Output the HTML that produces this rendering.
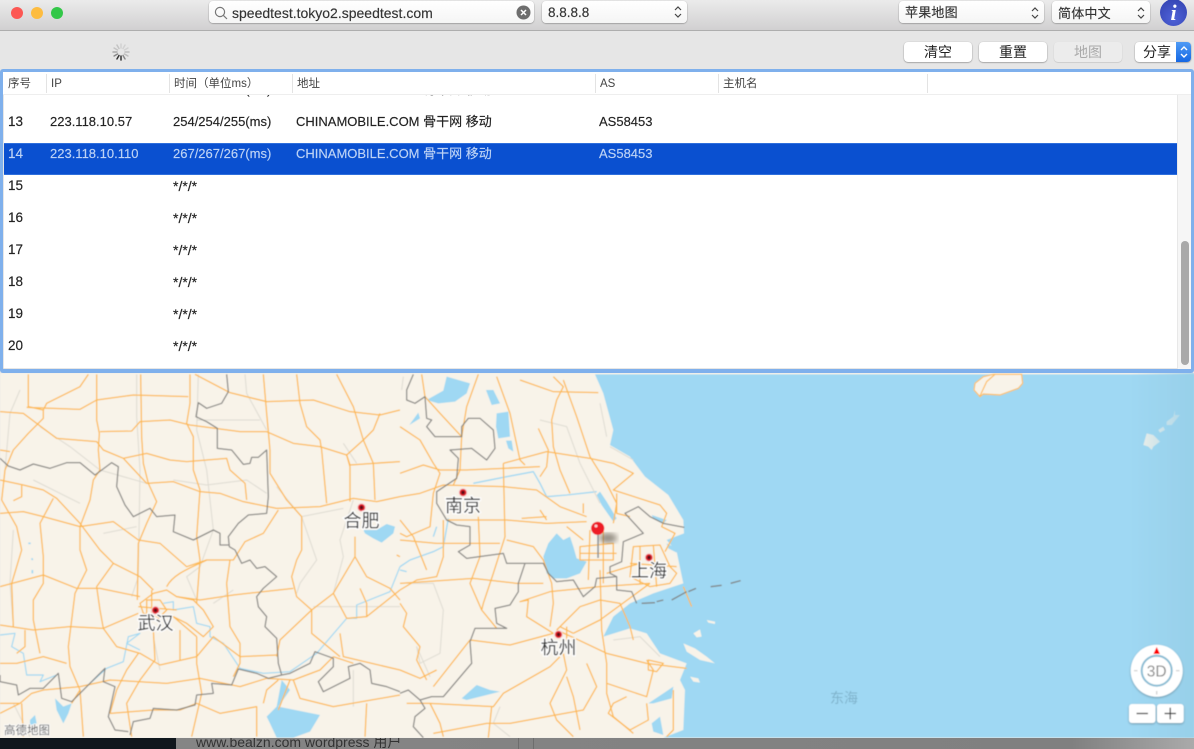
<!DOCTYPE html>
<html><head><meta charset="utf-8"><style>
*{box-sizing:border-box}
html,body{margin:0;padding:0;width:1194px;height:749px;overflow:hidden;background:#e6e6e6;font-family:"Liberation Sans","Noto Sans CJK SC",sans-serif}
.a{position:absolute}
.box{position:absolute;background:linear-gradient(#fff,#f5f5f5);border-radius:4px;box-shadow:0 .5px 1.5px rgba(0,0,0,.4);color:#333;font-size:13px}
.btn{position:absolute;top:42px;height:20px;width:68px;background:#fff;border-radius:4px;box-shadow:0 .5px 1.5px rgba(0,0,0,.45);text-align:center;font-size:14px;line-height:20px;color:#222;filter:blur(.25px)}
.t{position:absolute;font-size:13px;line-height:16px;color:#222;white-space:nowrap;filter:blur(.3px);-webkit-text-stroke:.15px currentColor}
.s{color:#bdd3f5}
.h{position:absolute;top:77px;font-size:11.5px;line-height:14px;color:#444;white-space:nowrap;filter:blur(.3px)}
.sep{position:absolute;top:74px;height:19px;width:1px;background:#e3e3e3}
.ud{position:absolute;width:10px;height:16px}
.city{font-size:18px;fill:#2b2b2b;stroke:#fff;stroke-width:2.5px;paint-order:stroke;text-anchor:middle;font-family:"Liberation Sans","Noto Sans CJK SC",sans-serif}
</style></head><body>
<div class="a" style="left:0;top:0;width:1194px;height:31px;background:linear-gradient(#ebebeb,#d1d0d1);border-bottom:1px solid #aeaeae"></div>
<div class="a" style="left:11px;top:6.5px;width:12px;height:12px;border-radius:50%;background:#fc5753"></div>
<div class="a" style="left:31px;top:6.5px;width:12px;height:12px;border-radius:50%;background:#fdbc40"></div>
<div class="a" style="left:51px;top:6.5px;width:12px;height:12px;border-radius:50%;background:#33c748"></div>

<div class="box" style="left:209px;top:1px;width:325px;height:22px"></div>
<svg class="a" style="left:213px;top:5px" width="16" height="16" viewBox="0 0 16 16" fill="none" stroke="#777" stroke-width="1.2"><circle cx="7" cy="7" r="4.6"/><path d="M10.4 10.4L14 14"/></svg>
<div class="t" style="left:232px;top:5px;font-size:14px;color:#333">speedtest.tokyo2.speedtest.com</div>
<svg class="a" style="left:516px;top:5px" width="15" height="15" viewBox="0 0 15 15"><circle cx="7.5" cy="7.5" r="7" fill="#6e6e6e"/><path d="M5 5l5 5M10 5l-5 5" stroke="#fff" stroke-width="1.5"/></svg>

<div class="box" style="left:542px;top:1px;width:145px;height:22px"></div>
<div class="t" style="left:548px;top:5px;font-size:13.5px;color:#333">8.8.8.8</div>
<svg class="ud" style="left:673px;top:4px" viewBox="0 0 10 16" fill="none" stroke="#444" stroke-width="1.2"><path d="M2 6l3-3 3 3M2 10l3 3 3-3"/></svg>

<div class="box" style="left:899px;top:1px;width:145px;height:22px"></div>
<div class="t" style="left:905px;top:5px;font-size:13px;letter-spacing:.2px;color:#333">苹果地图</div>
<svg class="ud" style="left:1030px;top:5px" viewBox="0 0 10 16" fill="none" stroke="#444" stroke-width="1.2"><path d="M2 6l3-3 3 3M2 10l3 3 3-3"/></svg>

<div class="box" style="left:1052px;top:1px;width:98px;height:22px"></div>
<div class="t" style="left:1058px;top:6px;font-size:13px;letter-spacing:.2px;color:#333">简体中文</div>
<svg class="ud" style="left:1136px;top:5px" viewBox="0 0 10 16" fill="none" stroke="#444" stroke-width="1.2"><path d="M2 6l3-3 3 3M2 10l3 3 3-3"/></svg>

<div class="a" style="left:1160px;top:-1px;width:27px;height:27px;border-radius:50%;background:radial-gradient(circle at 50% 70%,#4f62d8,#3040ad);color:#fff;text-align:center;font:italic bold 22px/27px 'Liberation Serif',serif">i</div>

<svg class="a" style="left:112px;top:43px" width="18" height="18" viewBox="-9 -9 18 18" stroke-width="1.5" stroke-linecap="round">
<g stroke="#d2d2d2"><path d="M0 -4V-8"/><path transform="rotate(30)" d="M0 -4V-8"/><path transform="rotate(60)" d="M0 -4V-8"/></g>
<g stroke="#bdbdbd"><path transform="rotate(90)" d="M0 -4V-8"/><path transform="rotate(120)" d="M0 -4V-8"/></g>
<g stroke="#8a8a8a"><path transform="rotate(150)" d="M0 -4V-8"/></g>
<g stroke="#333"><path transform="rotate(180)" d="M0 -4V-8"/><path transform="rotate(210)" d="M0 -4V-8"/></g>
<g stroke="#888"><path transform="rotate(240)" d="M0 -4V-8"/></g>
<g stroke="#aaa"><path transform="rotate(270)" d="M0 -4V-8"/></g>
<g stroke="#c4c4c4"><path transform="rotate(300)" d="M0 -4V-8"/><path transform="rotate(330)" d="M0 -4V-8"/></g>
</svg>

<div class="btn" style="left:904px">清空</div>
<div class="btn" style="left:979px">重置</div>
<div class="btn" style="left:1054px;background:#ececec;color:#aaa;box-shadow:0 .5px 1px rgba(0,0,0,.2)">地图</div>
<div class="btn" style="left:1135px;width:56px;text-align:left;padding-left:8px">分享</div>
<div class="a" style="left:1176px;top:42px;width:15px;height:20px;background:linear-gradient(#4f9bf5,#1467e4);border-radius:0 4px 4px 0"></div>
<svg class="a" style="left:1178.5px;top:44px" width="10" height="16" viewBox="0 0 10 16" fill="none" stroke="#fff" stroke-width="1.4"><path d="M2 6l3-3 3 3M2 10l3 3 3-3"/></svg>

<!-- table -->
<div class="a" style="left:0;top:69px;width:1194px;height:304px;background:#7fb0ec;border-radius:3px"></div>
<div class="a" style="left:3px;top:72px;width:1188px;height:297px;background:#fff;overflow:hidden;box-shadow:inset 0 0 0 .5px #ccc"></div>
<div class="a" style="left:3px;top:72px;width:1188px;height:297px;overflow:hidden">
  <div class="t" style="left:47px;top:10px">223.118.9.1</div>
  <div class="t" style="left:170px;top:10px">254/254/255(ms)</div>
  <div class="t" style="left:293px;top:10px">CHINAMOBILE.COM 骨干网 移动</div>
  <div class="a" style="left:0;top:0;width:1188px;height:23px;background:#fff;border-bottom:1px solid #eee"></div>
  <div class="a" style="left:1174px;top:23px;width:14px;height:274px;background:#f6f6f6;border-left:1px solid #e8e8e8"></div>
  <div class="a" style="left:1178px;top:169px;width:8px;height:124px;background:#a9a9a9;border-radius:4px"></div>
  <div class="a" style="left:1px;top:71px;width:1173px;height:32px;background:#0a50d0;border:1px solid #2f6fdc;border-left:0;border-right:0"></div>
</div>
<div class="h" style="left:8px">序号</div><div class="sep" style="left:46px"></div>
<div class="h" style="left:51px">IP</div><div class="sep" style="left:169px"></div>
<div class="h" style="left:174px">时间（单位ms）</div><div class="sep" style="left:292px"></div>
<div class="h" style="left:297px">地址</div><div class="sep" style="left:595px"></div>
<div class="h" style="left:600px">AS</div><div class="sep" style="left:718px"></div>
<div class="h" style="left:723px">主机名</div><div class="sep" style="left:927px"></div>

<div class="t" style="left:8px;top:114px;font-size:13.5px">13</div>
<div class="t" style="left:50px;top:114px">223.118.10.57</div>
<div class="t" style="left:173px;top:114px">254/254/255(ms)</div>
<div class="t" style="left:296px;top:114px">CHINAMOBILE.COM 骨干网 移动</div>
<div class="t" style="left:599px;top:114px">AS58453</div>
<div class="t s" style="left:8px;top:146px;font-size:13.5px">14</div>
<div class="t s" style="left:50px;top:146px">223.118.10.110</div>
<div class="t s" style="left:173px;top:146px">267/267/267(ms)</div>
<div class="t s" style="left:296px;top:146px">CHINAMOBILE.COM 骨干网 移动</div>
<div class="t s" style="left:599px;top:146px">AS58453</div>
<div class="t" style="left:8px;top:178px;font-size:13.5px">15</div><div class="t" style="left:173px;top:178px;font-size:14px">*/*/*</div>
<div class="t" style="left:8px;top:210px;font-size:13.5px">16</div><div class="t" style="left:173px;top:210px;font-size:14px">*/*/*</div>
<div class="t" style="left:8px;top:242px;font-size:13.5px">17</div><div class="t" style="left:173px;top:242px;font-size:14px">*/*/*</div>
<div class="t" style="left:8px;top:274px;font-size:13.5px">18</div><div class="t" style="left:173px;top:274px;font-size:14px">*/*/*</div>
<div class="t" style="left:8px;top:306px;font-size:13.5px">19</div><div class="t" style="left:173px;top:306px;font-size:14px">*/*/*</div>
<div class="t" style="left:8px;top:338px;font-size:13.5px">20</div><div class="t" style="left:173px;top:338px;font-size:14px">*/*/*</div>

<!-- map -->
<svg class="a" style="left:0;top:373px" width="1194" height="365" viewBox="0 373 1194 365">
<defs>
<linearGradient id="vg" x1="0" x2="1" y1="0" y2="0"><stop offset="0" stop-color="#97cfe8" stop-opacity="0"/><stop offset="1" stop-color="#97cfe8"/></linearGradient>
<filter id="b"><feGaussianBlur stdDeviation="3"/></filter>
<filter id="soft" x="0" y="0" width="100%" height="100%"><feGaussianBlur stdDeviation=".4"/></filter>
<filter id="sd"><feDropShadow dx="0" dy="1" stdDeviation="1" flood-color="#000" flood-opacity=".3"/></filter>
</defs>
<g filter="url(#soft)">
<rect x="0" y="373" width="1194" height="365" fill="#f8f3e9"/>

<!-- left part, traced in 3x coords -->
<g transform="translate(0,370) scale(.33333)" fill="none" stroke-linejoin="round">
<g stroke="#dedbd2" stroke-width="3">
<path d="M30,130L15,300M60,60L30,130M410,13L410,140L420,300L415,620L395,680M595,13L590,180L620,300L640,480L600,590L560,620L590,690M735,13L740,70L800,180M120,170L210,230L300,300L440,340M100,330L240,400M310,490L410,470M520,330L620,345L740,330L800,370M590,150L780,150M830,350L905,440L950,570L900,640L890,670M905,440L1030,415M1030,220L1070,280M1060,390L1020,510L1030,560L1000,670M640,700L700,660M940,710L1200,710M40,480L30,640L40,770M40,1000L90,1100M460,800L480,900M1060,900L1060,1010"/>
</g>
<g stroke="#9fd8f3" stroke-width="3.5">
<path d="M0,795L45,790L35,830L70,850L80,915L130,915L120,935L170,915M270,940L320,895L370,875L385,800L420,790L380,820L420,840M490,700L520,695L520,720L580,710L590,760L630,770L630,800L670,820L720,895L790,910L870,905L950,850L1010,780L1040,745L1070,745L1070,705L1170,665L1200,590"/>
<path d="M85,520L92,520M95,565L98,570M97,600L97,610" stroke-width="5"/>
</g>
<g fill="#9fd8f3" stroke="none">
<path d="M1090,480L1130,480L1160,462L1185,470L1180,490L1145,518L1120,505L1095,490Z"/>
<path d="M165,985L190,1010L215,1000L205,1030L190,1060L170,1020Z"/>
<path d="M90,1050L105,1035L110,1060L90,1065Z"/>
<path d="M800,1040L830,1010L845,930L870,960L835,1010L960,1035L930,1085L880,1103L830,1103L810,1060Z"/>
</g>
<g stroke="#fdb950" stroke-width="3.8">
<path d="M422,13L425,200L430,280L445,340L470,395L440,460L415,520L412,690M290,13L290,150L298,190L295,240L300,300L280,330L270,390L240,470L240,540L260,600L225,670L205,830L210,890L240,960L215,1000"/>
<path d="M85,13L85,110L130,120L130,145L85,190L40,240L15,300L5,390L50,470L65,540L35,640L40,770M0,125L70,130L110,160L170,205L290,215L310,240L370,265L440,250L510,270L560,275L680,265L690,300L735,340L740,390"/>
<path d="M265,13L240,50L140,100L130,120M80,112L240,118L290,90L400,75L565,80M585,13L690,68L800,95L940,90L1050,125L1140,135L1200,120M300,185L395,183L420,155L510,150L570,165L720,185L800,185L880,220L960,230L1040,255L1050,285L1120,280L1200,275"/>
<path d="M570,13L570,100L560,160L580,200L580,300L600,360L590,500L600,570L590,700M790,13L800,130L810,240L810,310L860,390L905,440L905,540L890,570L875,620L890,680L935,720L935,790L1020,860"/>
<path d="M0,330L70,345L130,360L170,385L240,460L300,540L340,580L420,620L460,660M0,240L30,245M160,385L120,460L130,560L130,640L100,690L100,750L120,850M65,345L65,380L40,392"/>
<path d="M0,430L70,425L130,440L240,470L340,455L415,510L480,520L560,590L620,570L700,570L735,515L790,490L835,420M370,265L440,340L520,335L600,365L660,370L730,395L830,415L960,410L1060,385L1130,395L1200,380"/>
<path d="M0,650L130,615L230,655L300,655L420,680M500,650C520,610 580,590 620,570M340,580L290,650L300,720L310,775L350,830L420,850L480,885L590,860L640,800L720,860L830,855"/>
<path d="M0,765L100,780L210,770L310,775L415,730M680,640L690,570M680,640L690,770L720,820L720,880L700,920M530,680L600,690L700,675L880,655M540,780L540,870M590,800L590,880L605,970L575,1100M460,780L465,870L420,930L380,1000L395,1100"/>
<path d="M0,880L50,880L130,860L200,880M415,850L380,900L350,960L330,1030M0,1030L60,1000L95,970L130,960L240,950L330,930L500,940L600,925L720,950L800,925L880,930L960,900L1000,860M880,930L900,985L1000,1010L1200,975M835,1020L870,930"/>
<path d="M1065,500L1065,560L1000,670L935,720L840,810L830,860M1065,560L1100,620L1170,655L1200,690M890,13L900,100L920,170L960,210L965,240L980,400M1010,13L1060,110L1090,210L1120,280L1125,390M1140,130L1120,180L1090,210L1040,255L1050,290L1050,395M1000,670L1040,745L1100,740L1200,660M1080,655L1100,700L1100,740M1020,790L1030,860L1200,900M1000,860L1060,880"/>
<path d="M65,1000L70,1100M240,960L250,1100M330,1030L460,1020L540,1020L590,1000L660,1030L770,1010L770,1100M790,1000L800,960L835,930M0,1000L60,1000M50,850L75,830L75,780M1100,1000L1095,1100M1190,555L1200,560"/>
<path d="M420,700L460,670L500,660L530,680L580,690L610,720L640,770L610,800L560,760L520,740L470,740L430,730ZM440,690L480,690L500,720L470,750L440,730ZM455,660L455,750M415,710L530,720M520,740L590,800"/>
</g>
<g stroke="#7f7e7b" stroke-width="3.8" opacity=".9">
<path d="M680,13L685,65L665,100L620,115L595,98L588,140L620,155L652,175L652,235L695,240L730,283L750,280L755,262L775,262L800,240L805,380L800,430L745,435L715,460L685,500L688,530L705,540L725,580L750,570L770,595L795,590L830,620L790,655L770,680L775,710L800,740L795,770L830,805L835,880L845,915L805,925L770,910L715,897L695,945L635,940L640,970L590,975L585,1005L530,1020L460,1015L450,1045L400,1055L390,1095"/>
<path d="M0,265L25,288L60,300L100,282L150,295L200,278L240,278L285,315L335,278L355,290L350,350L375,405L400,440L450,415L470,440L525,435L520,485L580,510L640,480L660,490L660,525L688,525"/>
<path d="M0,915L0,935L50,945L55,975L90,955L130,955L175,910L185,985L215,995L315,895L310,935L345,950L325,1040L345,1080L385,1085"/>
<path d="M845,915L870,910L930,880L945,845L1000,865L1000,890L955,935L970,965L1050,925L1045,890L1080,880L1110,900L1115,940L1160,950L1200,965"/>
</g>
</g>

<!-- east part, traced in 3x coords -->
<g transform="translate(400,370) scale(.33333)" fill="none" stroke-linejoin="round">
<path fill="#9fd8f3" d="M585,13L610,70L640,180L630,225L690,260L735,320L805,375L850,450L852,490L800,510L830,545L850,640L760,670L690,700L640,740L610,800L690,775L740,790L780,850L860,880L840,930L855,960L850,1080L790,1103L2400,1103L2400,13Z"/>
<g fill="#f8f3e9"><path d="M880,790L900,778L905,800L890,802ZM850,820L885,835L920,860L945,880L900,870L860,845ZM870,920L895,925L900,938L880,935ZM920,750L945,755L945,762L925,758Z"/></g>
<g fill="#9fd8f3" stroke="none">
<path d="M80,90L130,62L140,20L210,40L200,70L165,95L115,100Z"/>
<path d="M258,60L280,60L300,100L275,105Z"/>
<path d="M290,130L325,125L330,200L295,205L288,170Z"/>
<path d="M28,165L55,128L60,145Z"/>
<path d="M318,212L335,212L340,245L325,235Z"/>
<path d="M430,560L445,520L470,490L490,510L510,500L520,530L530,565L560,575L540,610L500,625L460,625L440,610Z"/>
<path d="M185,985L230,945L270,960L300,965L260,975L200,990Z"/>
<path d="M745,1000L790,970L820,950L815,985L760,1000Z"/>
<path d="M755,1060L780,1040L790,1095L760,1085Z"/>
<path d="M600,365L620,395L650,445L640,455L605,405L590,375ZM755,435L800,450L790,462L760,445ZM800,520L830,535L830,548L805,535Z"/>
</g>
<g stroke="#9fd8f3" stroke-width="4">
<path d="M0,590L30,570L100,545L130,530L145,445M220,340L320,320L400,305L420,340L440,380L500,375L590,365M0,600L20,605M110,470L100,500"/>
</g>
<g stroke="#dedbd2" stroke-width="3">
<path d="M10,20L5,60M20,640L100,640L130,720L120,850L60,880L50,830L90,920M420,150L500,170L540,280L600,400M600,100L620,200M300,1010L280,1060L330,1100M630,230L700,270M640,810L720,800L780,860"/>
</g>
<g stroke="#fdb950" stroke-width="3.8">
<path d="M65,13L75,80L120,130L185,200M235,13L200,110L185,200L180,300L160,345M290,20L330,130L360,270L375,285M360,30L460,65L595,68M460,20L490,50L470,90L455,150L460,230L480,300L510,370M490,30L530,140L570,260L620,340L650,400L640,460M415,175L445,240L440,290L420,320"/>
<path d="M0,170L60,210L100,280L120,310L100,370L90,470L20,500L0,490M0,380L60,370L130,345L310,350L410,360L480,410L560,440M310,280L440,245L570,265L640,280L700,310L640,360L780,405L800,430L785,470L825,490L795,545M0,310L70,285L120,300L200,300L310,295L420,290"/>
<path d="M310,280L315,500L280,610L250,700L245,720L290,775M235,440L240,560L210,640L245,720M140,450L320,450L440,460L560,455M365,445L440,440M130,450L130,560L110,620L50,630L0,660M0,450L40,500L80,600M0,510L110,520L230,520L300,520"/>
<path d="M320,510L400,530L430,570L455,640L460,700L450,770M0,640L220,625L350,640L430,640M0,700L20,730L10,770L60,830L50,870L80,930M100,950L210,810L330,825L460,790M460,790L380,740L385,690L360,695L450,665L600,650L750,640M470,780L540,710L600,690L660,700L690,770L700,810M520,790L600,750L750,640"/>
<path d="M600,600L605,780L620,880L620,970L640,1040L700,1090M525,805L620,850L740,880L860,895M490,850L500,900L450,1000L470,1050L520,1100M500,920L520,980L540,1080M560,880L590,950L550,1020L440,1040L330,1060L260,1060L100,1090M0,900L60,925L110,900M90,1000L120,1060L130,1100M20,1000L90,1000M90,1000L280,1010L310,970L450,890L490,850M275,1010L265,1103M620,940L740,980L760,900L740,870"/>
<path d="M745,870L790,880L770,905L745,900ZM820,960L820,1080L800,1100M680,980L640,1000L625,1030L690,1080L745,1050L740,1000M850,650L875,710M700,530L780,525L810,590L830,610L810,640L750,650L690,620ZM720,530L720,640M690,580L830,590M760,525L770,650"/>
<path d="M540,530L640,520L640,570L540,570ZM570,480L565,630M610,470L610,640M540,550L650,550M650,370L650,430L690,440M500,470L550,510M420,420L440,450M550,400L550,430M620,610L720,580M470,780L525,805M500,770L500,810M480,770L520,790"/>
</g>
<g stroke="#7f7e7b" stroke-width="3.8" opacity=".9">
<path d="M40,13L20,60L20,90L45,100L75,80L80,145L95,150L80,170L105,200L185,200L185,170L205,145L240,145L280,180L285,235L260,270L215,235L150,240L175,265L170,325L110,365L110,400L140,450L170,465L210,470L210,525L175,545L200,565L310,550L320,580L375,580L430,580L445,610L470,635L520,630L550,680L585,650L590,625L650,620L650,660L695,665L710,700"/>
<path d="M375,580L355,640L355,665L330,705L285,715L290,760L320,775L225,775L210,815L215,880L130,980L95,980L60,990L25,960L0,970M60,990L75,1015L45,1040L40,1070L70,1103"/>
<path d="M650,620L630,610L630,590L665,575L670,515L730,490L675,430L715,410L750,440L790,460L853,472"/>
<path d="M725,700L765,698M770,695L790,690M815,690L860,665M865,665L888,655M932,650L965,646M992,640L1022,632" stroke-width="4"/>
</g>
</g>

<!-- Jeju + Japanese islands -->
<g transform="translate(800,370) scale(.33333)">
<path d="M580,13L665,13L668,40L655,55L600,75L550,72L540,80L522,60L525,40L550,20Z" fill="#f8f3e9" stroke="#fdbd5c" stroke-width="3.5"/>
<path d="M585,13L560,35L540,78" fill="none" stroke="#fdbd5c" stroke-width="3.5"/>
<path d="M1030,225L1040,190L1060,195L1080,215L1060,230L1055,240L1045,230ZM1075,180L1090,170L1095,180L1080,188ZM1100,155L1120,140L1125,120L1125,135L1140,135L1115,165L1100,165Z" fill="#f8f3e9"/>
</g>
<rect x="1130" y="373" width="64" height="365" fill="url(#vg)" opacity=".9"/>

<!-- city markers -->
<g id="c">
<circle cx="155.500" cy="610.300" r="4" fill="#e0202c" stroke="#f8d8d8" stroke-width="1"/><circle cx="155.500" cy="610.300" r="1.700" fill="#5a0d12"/>
<circle cx="361.500" cy="507.500" r="4" fill="#e0202c" stroke="#f8d8d8" stroke-width="1"/><circle cx="361.500" cy="507.500" r="1.700" fill="#5a0d12"/>
<circle cx="463" cy="492.500" r="4" fill="#e0202c" stroke="#f8d8d8" stroke-width="1"/><circle cx="463" cy="492.500" r="1.700" fill="#5a0d12"/>
<circle cx="649" cy="557.500" r="4" fill="#e0202c" stroke="#f8d8d8" stroke-width="1"/><circle cx="649" cy="557.500" r="1.700" fill="#5a0d12"/>
<circle cx="558.500" cy="634.500" r="4" fill="#e0202c" stroke="#f8d8d8" stroke-width="1"/><circle cx="558.500" cy="634.500" r="1.700" fill="#5a0d12"/>
</g>
<text class="city" x="155.500" y="629.500">武汉</text>
<text class="city" x="361.500" y="527">合肥</text>
<text class="city" x="463" y="512">南京</text>
<text class="city" x="649" y="577">上海</text>
<text class="city" x="558.500" y="654">杭州</text>
<text x="844" y="703" font-size="14" fill="#7fb2cb" text-anchor="middle" font-family="Liberation Sans,Noto Sans CJK SC,sans-serif">东海</text>
<text x="4" y="734" font-size="11.500" fill="#555" stroke="#fff" stroke-width="1.500" paint-order="stroke" font-family="Liberation Sans,Noto Sans CJK SC,sans-serif">高德地图</text>

<!-- pin -->
<ellipse cx="608" cy="538" rx="9" ry="5" fill="#6b6459" opacity=".7" filter="url(#b)"/>
<rect x="597.300" y="534" width="1.500" height="24" fill="#8a8f94"/>
<circle cx="597.700" cy="528.300" r="6.600" fill="#ee1c25"/>
<circle cx="596" cy="526" r="1.500" fill="#fff" opacity=".8"/>

<!-- compass -->
<g filter="url(#sd)">
<circle cx="1156.700" cy="670.700" r="26" fill="#fff"/>
<rect x="1129" y="704" width="26.500" height="19" rx="3" fill="#fff"/>
<rect x="1157" y="704" width="26.700" height="19" rx="3" fill="#fff"/>
</g>
<circle cx="1156.700" cy="670.700" r="15" fill="#fff" stroke="#8bbdd4" stroke-width="2"/>
<text x="1156.700" y="676.500" font-size="15.500" fill="#8a8a8a" text-anchor="middle" font-family="Liberation Sans,sans-serif">3D</text>
<path d="M1156.700 647L1160 654H1153.400Z" fill="#f00"/>
<path d="M1134 670.700h3.500M1176 670.700h3.500M1156.700 691v3.500" stroke="#ccc" stroke-width="1.200"/>
<path d="M1136.500 713.500h11.500M1164.500 713.500h11.500M1170.200 707.800v11.500" stroke="#333" stroke-width="1.200"/>
</g>
</svg>

<!-- bottom desktop strip -->
<div class="a" style="left:0;top:738px;width:176px;height:11px;background:#10171d"></div>
<div class="a" style="left:176px;top:738px;width:1018px;height:11px;background:linear-gradient(90deg,#858585 0,#808080 88%,#aaa 100%);overflow:hidden">
  <div class="a" style="left:20px;top:-5px;font-size:14px;line-height:18px;color:#333;white-space:nowrap;filter:blur(.3px)">www.bealzn.com wordpress 用户</div>
  <div class="a" style="left:342px;top:0;width:1px;height:11px;background:#6d6d6d"></div>
  <div class="a" style="left:357px;top:0;width:1px;height:11px;background:#6d6d6d"></div>
</div>
</body></html>
